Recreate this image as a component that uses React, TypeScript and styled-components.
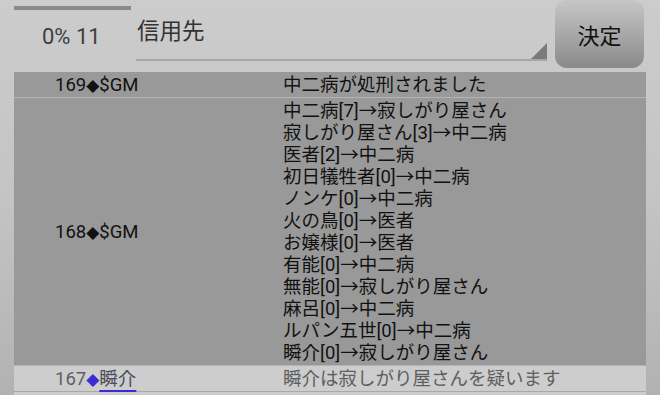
import React from "react";
import styled, { createGlobalStyle } from "styled-components";

const GlobalStyle = createGlobalStyle`
  html, body { margin: 0; padding: 0; }
  body {
    font-family: Roboto, "Noto Sans CJK JP", sans-serif;
    background: #c4c4c4;
    overflow: hidden;
  }
`;

const Page = styled.div`
  width: 660px;
  height: 395px;
  box-sizing: border-box;
  padding: 0 14px;
  background: linear-gradient(to bottom, #cccccc 0%, #c4c4c4 50%, #b2b2b2 100%);
  overflow: hidden;
`;

const Header = styled.div`
  display: flex;
  height: 72px;
`;

const Status = styled.div`
  width: 122px;
  display: flex;
  flex-direction: column;
`;

const Progress = styled.div`
  margin-top: 6px;
  width: 117px;
  height: 4px;
  background: #8a8a8a;
`;

const StatusLabel = styled.div`
  margin-top: 14px;
  padding-left: 28px;
  font-size: 22px;
  line-height: 26px;
  color: #3e3e3e;
`;

const Field = styled.div`
  flex: 1;
  position: relative;
  margin-bottom: 11px;
  border-bottom: 2px solid #a6a6a6;
  font-size: 22.5px;
  line-height: 30px;
  color: #333333;
  padding: 16px 0 0 1px;

  &::after {
    content: "";
    position: absolute;
    right: 0;
    bottom: 0;
    width: 0;
    height: 0;
    border-left: 16px solid transparent;
    border-bottom: 16px solid #7a7a7a;
  }
`;

const Button = styled.button`
  width: 89px;
  height: 68px;
  margin: 0 2px 0 8px;
  border: none;
  border-radius: 12px;
  background: linear-gradient(to bottom, #c6c6c6 0%, #a8a8a8 50%, #8a8a8a 100%);
  font-family: inherit;
  font-size: 22px;
  color: #111111;
  padding: 0;
  cursor: pointer;
`;

const Log = styled.div`
  display: flex;
  flex-direction: column;
`;

const Row = styled.div<{ $light?: boolean }>`
  display: grid;
  grid-template-columns: 269px 1fr;
  align-items: center;
  padding: 2px 0 1px;
  background: ${(p) => (p.$light ? "#cdcdcd" : "#999999")};
  border-bottom: 1px solid ${(p) => (p.$light ? "#a9a9a9" : "#b4b4b4")};
  font-size: 18.5px;
  line-height: 22px;
  color: ${(p) => (p.$light ? "#5f5f5f" : "#111111")};
`;

const Who = styled.div`
  padding-left: 41px;
  height: 22px;
  white-space: nowrap;
`;

const Lines = styled.div`
  display: flex;
  flex-direction: column;
  white-space: nowrap;
`;

const Line = styled.div`
  height: 22px;
`;

const Mark = styled.span<{ $blue?: boolean }>`
  font-family: "DejaVu Sans", sans-serif;
  font-size: 17px;
  line-height: 0;
  color: ${(p) => (p.$blue ? "#3b2bd2" : "inherit")};
`;

const Arrow = styled.span`
  font-family: "Noto Sans CJK JP", sans-serif;
  line-height: 0;
`;

const NameLink = styled.a`
  color: #4c4c5c;
  text-decoration: underline;
  text-decoration-color: #3b2bd2;
  text-decoration-thickness: 2px;
  text-underline-offset: 5px;
`;

const votes: [string, string][] = [
  ["中二病[7]", "寂しがり屋さん"],
  ["寂しがり屋さん[3]", "中二病"],
  ["医者[2]", "中二病"],
  ["初日犠牲者[0]", "中二病"],
  ["ノンケ[0]", "中二病"],
  ["火の鳥[0]", "医者"],
  ["お嬢様[0]", "医者"],
  ["有能[0]", "中二病"],
  ["無能[0]", "寂しがり屋さん"],
  ["麻呂[0]", "中二病"],
  ["ルパン五世[0]", "中二病"],
  ["瞬介[0]", "寂しがり屋さん"],
];

export default function App() {
  return (
    <>
      <GlobalStyle />
      <Page>
        <Header>
          <Status>
            <Progress />
            <StatusLabel>0% 11</StatusLabel>
          </Status>
          <Field>信用先</Field>
          <Button>決定</Button>
        </Header>
        <Log>
          <Row>
            <Who>169<Mark>◆</Mark>$GM</Who>
            <Lines>
              <Line>中二病が処刑されました</Line>
            </Lines>
          </Row>
          <Row>
            <Who>168<Mark>◆</Mark>$GM</Who>
            <Lines>
              {votes.map(([from, to]) => (
                <Line key={from}>
                  {from}
                  <Arrow>→</Arrow>
                  {to}
                </Line>
              ))}
            </Lines>
          </Row>
          <Row $light>
            <Who>
              167<Mark $blue>◆</Mark>
              <NameLink>瞬介</NameLink>
            </Who>
            <Lines>
              <Line>瞬介は寂しがり屋さんを疑います</Line>
            </Lines>
          </Row>
          <Row $light>
            <Who />
            <Lines>
              <Line />
            </Lines>
          </Row>
        </Log>
      </Page>
    </>
  );
}
